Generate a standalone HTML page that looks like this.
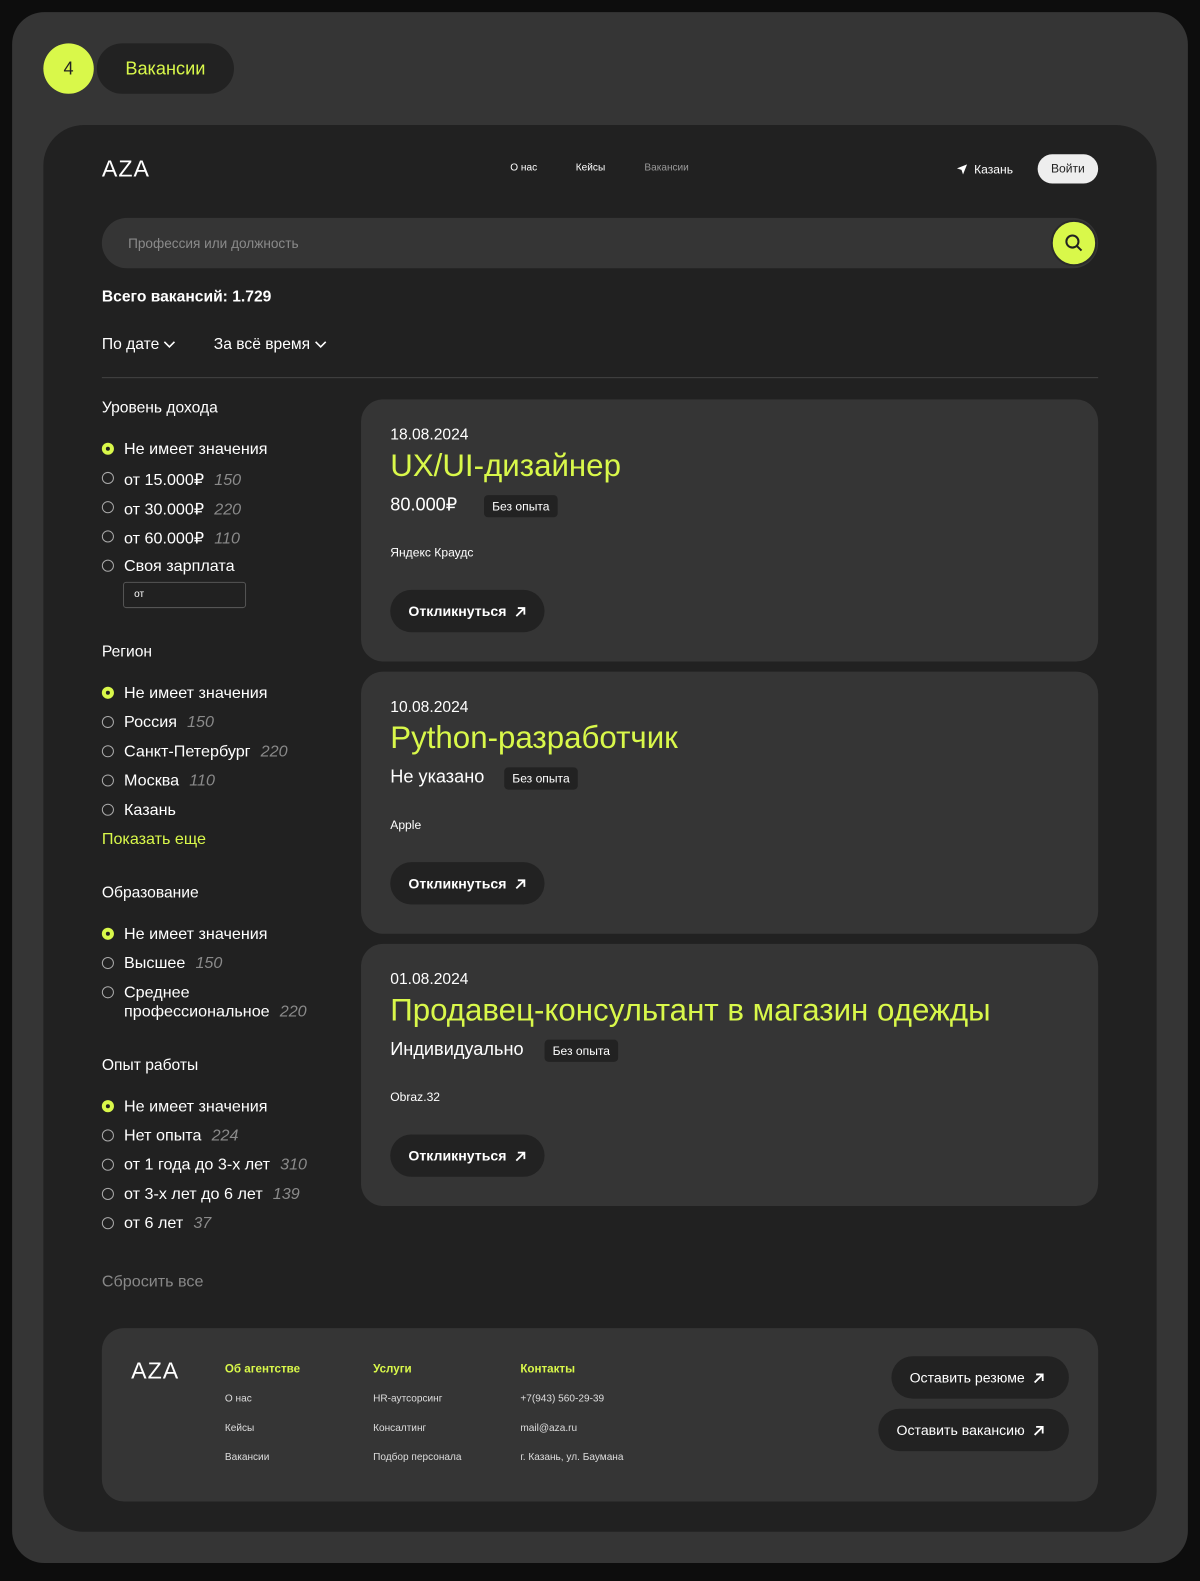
<!DOCTYPE html>
<html><head><meta charset="utf-8"><style>
*{margin:0;padding:0;box-sizing:border-box}
body{width:1200px;height:1581px;background:#0d0d0d;font-family:"Liberation Sans",sans-serif;color:#fff;position:relative;overflow:hidden}
#w{position:absolute;left:0;top:0;width:1190px;height:1568px;transform:scale(1.0084);transform-origin:0 0}
.a{position:absolute}
.frame{left:12px;top:12px;width:1166px;height:1538px;background:#353535;border-radius:32px}
.panel{left:43px;top:124px;width:1104px;height:1395px;background:#212121;border-radius:40px}
.acc{color:#d9f84a !important}
.radio{position:absolute;width:12px;height:12px;border:1.3px solid #aaa;border-radius:50%}
.radio.on{border:none;background:#d9f84a}
.radio.on:after{content:"";position:absolute;left:4px;top:4px;width:4px;height:4px;border-radius:50%;background:#212121}
.fi{position:absolute;font-size:16px;color:#fff;white-space:nowrap}
.fi i{color:#8a8a8a;margin-left:10px}
.fh{position:absolute;font-size:15.5px;color:#fff}
.card{position:absolute;left:358px;width:731px;height:260px;background:#353535;border-radius:22px}
.card .d{position:absolute;left:29px;top:27px;font-size:15.5px}
.card .t{position:absolute;left:29px;top:48px;font-size:31px;color:#d9f84a}
.card .s{position:absolute;left:29px;top:94px;font-size:18px}
.card .b{position:absolute;top:95px;height:22px;padding:0 8px;background:#222;border-radius:4px;font-size:12px;line-height:22px}
.card .c{position:absolute;left:29px;top:145px;font-size:12px}
.btn{position:absolute;height:42px;background:#222;border-radius:21px;font-size:14px;font-weight:bold;line-height:42px;padding:0 18px;white-space:nowrap}
.btn svg{vertical-align:-2px;margin-left:8px}
.card .btn{left:29px;top:189px}
.fc{position:absolute;font-size:10px;color:#ddd}
</style></head><body><div id="w">
<div class="a frame"></div>
<div class="a" style="left:43px;top:43px;width:50px;height:50px;border-radius:50%;background:#d9f84a;color:#222;font-size:18px;text-align:center;line-height:50px">4</div>
<div class="a acc" style="left:96px;top:43px;width:136px;height:50px;border-radius:25px;background:#222;font-size:18px;text-align:center;line-height:50px">Вакансии</div>
<div class="a panel"></div>
<div class="a" style="left:101px;top:154px;font-size:23px;letter-spacing:1px;font-weight:300">AZA</div>
<div class="a" style="left:506px;top:161px;font-size:10px">О нас</div>
<div class="a" style="left:571px;top:161px;font-size:10px">Кейсы</div>
<div class="a" style="left:639px;top:161px;font-size:10px;color:#999">Вакансии</div>
<svg class="a" style="left:948px;top:162px" width="12" height="12" viewBox="0 0 12 12"><path d="M11 1L1 5l4.5 1.5L7 11z" fill="#fff"/></svg>
<div class="a" style="left:966px;top:161px;font-size:12px">Казань</div>
<div class="a" style="left:1029px;top:153px;width:60px;height:29px;border-radius:15px;background:#eee;color:#222;font-size:12px;text-align:center;line-height:29px">Войти</div>
<div class="a" style="left:101px;top:216px;width:988px;height:50px;border-radius:25px;background:#353535"></div>
<div class="a" style="left:127px;top:234px;font-size:13.5px;color:#8a8a8a">Профессия или должность</div>
<div class="a" style="left:1042px;top:218px;width:46px;height:46px;border-radius:50%;background:#d9f84a;border:2px solid #2a2a2a"></div>
<svg class="a" style="left:1055px;top:231px" width="20" height="20" viewBox="0 0 20 20"><circle cx="8.5" cy="8.5" r="6" fill="none" stroke="#222" stroke-width="2"/><path d="M13 13l4.5 4.5" stroke="#222" stroke-width="2"/></svg>
<div class="a" style="left:101px;top:286px;font-size:15.5px;font-weight:bold">Всего вакансий: 1.729</div>
<div class="a" style="left:101px;top:333px;font-size:15.5px">По дате <svg width="12" height="8" viewBox="0 0 12 8"><path d="M1 1l5 5 5-5" stroke="#fff" stroke-width="1.6" fill="none"/></svg></div>
<div class="a" style="left:212px;top:333px;font-size:15.5px">За всё время <svg width="12" height="8" viewBox="0 0 12 8"><path d="M1 1l5 5 5-5" stroke="#fff" stroke-width="1.6" fill="none"/></svg></div>
<div class="a" style="left:101px;top:374px;width:988px;height:1px;background:#444"></div>

<div class="fh" style="left:101px;top:396px">Уровень дохода</div>
<div class="radio on" style="left:101px;top:439px"></div><div class="fi" style="left:123px;top:437px">Не имеет значения</div>
<div class="radio" style="left:101px;top:468px"></div><div class="fi" style="left:123px;top:466px">от 15.000₽<i>150</i></div>
<div class="radio" style="left:101px;top:497px"></div><div class="fi" style="left:123px;top:495px">от 30.000₽<i>220</i></div>
<div class="radio" style="left:101px;top:526px"></div><div class="fi" style="left:123px;top:524px">от 60.000₽<i>110</i></div>
<div class="radio" style="left:101px;top:555px"></div><div class="fi" style="left:123px;top:553px">Своя зарплата</div>
<div class="a" style="left:122px;top:577px;width:122px;height:26px;border:1.3px solid #555;border-radius:3px;font-size:10px;padding:6px 10px">от</div>

<div class="fh" style="left:101px;top:638px">Регион</div>
<div class="radio on" style="left:101px;top:681px"></div><div class="fi" style="left:123px;top:679px">Не имеет значения</div>
<div class="radio" style="left:101px;top:710px"></div><div class="fi" style="left:123px;top:708px">Россия<i>150</i></div>
<div class="radio" style="left:101px;top:739px"></div><div class="fi" style="left:123px;top:737px">Санкт-Петербург<i>220</i></div>
<div class="radio" style="left:101px;top:768px"></div><div class="fi" style="left:123px;top:766px">Москва<i>110</i></div>
<div class="radio" style="left:101px;top:797px"></div><div class="fi" style="left:123px;top:795px">Казань</div>
<div class="fi acc" style="left:101px;top:824px">Показать еще</div>

<div class="fh" style="left:101px;top:877px">Образование</div>
<div class="radio on" style="left:101px;top:920px"></div><div class="fi" style="left:123px;top:918px">Не имеет значения</div>
<div class="radio" style="left:101px;top:949px"></div><div class="fi" style="left:123px;top:947px">Высшее<i>150</i></div>
<div class="radio" style="left:101px;top:978px"></div><div class="fi" style="left:123px;top:976px">Среднее</div>
<div class="fi" style="left:123px;top:995px">профессиональное<i>220</i></div>

<div class="fh" style="left:101px;top:1048px">Опыт работы</div>
<div class="radio on" style="left:101px;top:1091px"></div><div class="fi" style="left:123px;top:1089px">Не имеет значения</div>
<div class="radio" style="left:101px;top:1120px"></div><div class="fi" style="left:123px;top:1118px">Нет опыта<i>224</i></div>
<div class="radio" style="left:101px;top:1149px"></div><div class="fi" style="left:123px;top:1147px">от 1 года до 3-х лет<i>310</i></div>
<div class="radio" style="left:101px;top:1178px"></div><div class="fi" style="left:123px;top:1176px">от 3-х лет до 6 лет<i>139</i></div>
<div class="radio" style="left:101px;top:1207px"></div><div class="fi" style="left:123px;top:1205px">от 6 лет<i>37</i></div>
<div class="fi" style="left:101px;top:1263px;color:#888">Сбросить все</div>

<div class="card" style="top:396px"><div class="d">18.08.2024</div><div class="t">UX/UI-дизайнер</div><div class="s">80.000₽</div><div class="b" style="left:122px">Без опыта</div><div class="c">Яндекс Краудс</div><div class="btn">Откликнуться<svg width="12" height="12" viewBox="0 0 12 12"><path d="M2 10L10 2M3.5 2H10v6.5" stroke="#fff" stroke-width="1.8" fill="none"/></svg></div></div>
<div class="card" style="top:666px"><div class="d">10.08.2024</div><div class="t">Python-разработчик</div><div class="s">Не указано</div><div class="b" style="left:142px">Без опыта</div><div class="c">Apple</div><div class="btn">Откликнуться<svg width="12" height="12" viewBox="0 0 12 12"><path d="M2 10L10 2M3.5 2H10v6.5" stroke="#fff" stroke-width="1.8" fill="none"/></svg></div></div>
<div class="card" style="top:936px"><div class="d">01.08.2024</div><div class="t">Продавец-консультант в магазин одежды</div><div class="s">Индивидуально</div><div class="b" style="left:182px">Без опыта</div><div class="c">Obraz.32</div><div class="btn">Откликнуться<svg width="12" height="12" viewBox="0 0 12 12"><path d="M2 10L10 2M3.5 2H10v6.5" stroke="#fff" stroke-width="1.8" fill="none"/></svg></div></div>

<div class="a" style="left:101px;top:1317px;width:988px;height:172px;background:#353535;border-radius:22px"></div>
<div class="a" style="left:130px;top:1346px;font-size:23px;letter-spacing:1px;font-weight:300">AZA</div>
<div class="fc" style="left:223px;top:1352px;font-size:11.5px;font-weight:bold;color:#d9f84a">Об агентстве</div>
<div class="fc" style="left:223px;top:1382px">О нас</div><div class="fc" style="left:223px;top:1411px">Кейсы</div><div class="fc" style="left:223px;top:1440px">Вакансии</div>
<div class="fc" style="left:370px;top:1352px;font-size:11.5px;font-weight:bold;color:#d9f84a">Услуги</div>
<div class="fc" style="left:370px;top:1382px">HR-аутсорсинг</div><div class="fc" style="left:370px;top:1411px">Консалтинг</div><div class="fc" style="left:370px;top:1440px">Подбор персонала</div>
<div class="fc" style="left:516px;top:1352px;font-size:11.5px;font-weight:bold;color:#d9f84a">Контакты</div>
<div class="fc" style="left:516px;top:1382px">+7(943) 560-29-39</div><div class="fc" style="left:516px;top:1411px">mail@aza.ru</div><div class="fc" style="left:516px;top:1440px">г. Казань, ул. Баумана</div>
<div class="btn" style="left:884px;top:1345px;width:176px;font-weight:normal">Оставить резюме<svg width="12" height="12" viewBox="0 0 12 12"><path d="M2 10L10 2M3.5 2H10v6.5" stroke="#fff" stroke-width="1.8" fill="none"/></svg></div>
<div class="btn" style="left:871px;top:1397px;width:189px;font-weight:normal">Оставить вакансию<svg width="12" height="12" viewBox="0 0 12 12"><path d="M2 10L10 2M3.5 2H10v6.5" stroke="#fff" stroke-width="1.8" fill="none"/></svg></div>
</div></body></html>
